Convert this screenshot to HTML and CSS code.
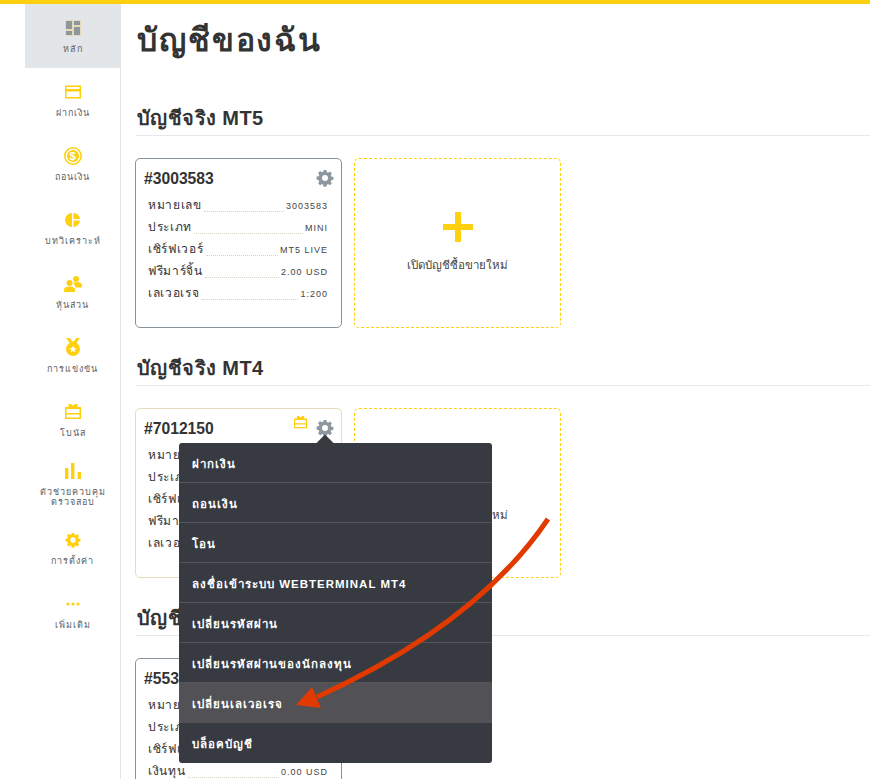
FILE: index.html
```html
<!DOCTYPE html>
<html lang="th">
<head>
<meta charset="utf-8">
<title>บัญชีของฉัน</title>
<link rel="stylesheet" href="styles.css">
</head>
<body>
<svg class="defs" width="0" height="0" aria-hidden="true">
  <defs>
    <path id="gear" fill-rule="evenodd" d="M6.6 0h2.8l.4 2.1 1.3.6 1.8-1.2 2 2-1.2 1.8.6 1.3 2.1.4v2.8l-2.1.4-.6 1.3 1.2 1.8-2 2-1.8-1.2-1.3.6-.4 2.1H6.6l-.4-2.1-1.3-.6-1.8 1.2-2-2 1.2-1.8-.6-1.3L-.4 9.4V6.6l2.1-.4.6-1.3-1.2-1.8 2-2 1.8 1.2 1.3-.6zM8 5a3 3 0 1 0 0 6 3 3 0 0 0 0-6z"/>
  </defs>
</svg>
<div class="topbar"></div>
<div class="layout">
  <nav class="sidebar">
    <a class="nav-item active">
      <svg class="nav-icon" viewBox="0 0 16 16"><rect width="16" height="16" fill="#e8d9b8"/><rect x="1" y="1" width="6" height="8" fill="#8f979e"/><rect x="9" y="1" width="6" height="4" fill="#8f979e"/><rect x="9" y="7" width="6" height="8" fill="#8f979e"/><rect x="1" y="11" width="6" height="4" fill="#8f979e"/></svg>
      <span>หลัก</span>
    </a>
    <a class="nav-item">
      <svg class="nav-icon" viewBox="0 0 16 16"><path fill="#ffd00f" fill-rule="evenodd" d="M0 1.500h16v13H0zM1.500 3v2h13V3zm0 4.500V13h13V7.500z"/></svg>
      <span>ฝากเงิน</span>
    </a>
    <a class="nav-item">
      <svg class="nav-icon coin" viewBox="0 0 18 18"><circle cx="9" cy="9" r="8.200" fill="none" stroke="#ffd00f" stroke-width="1.600"/><circle cx="9" cy="9" r="6" fill="#ffd00f"/><text x="9" y="12.800" class="dollar">$</text></svg>
      <span>ถอนเงิน</span>
    </a>
    <a class="nav-item">
      <svg class="nav-icon" viewBox="0 0 16 16"><path fill="#ffd00f" d="M7 1V15A7 7 0 0 1 7 1zM8.500 1A7 7 0 0 1 15 7H8.500zM8.500 8.500H15A7 7 0 0 1 8.500 15z"/></svg>
      <span>บทวิเคราะห์</span>
    </a>
    <a class="nav-item">
      <svg class="nav-icon big" viewBox="0 0 18 16"><circle cx="12" cy="3" r="3" fill="#ffd00f"/><circle cx="5.500" cy="7" r="3" fill="#ffd00f"/><path fill="#ffd00f" d="M0 16v-2.500C0 11.500 2.500 10.500 5.500 10.500S11 11.500 11 13.500V16zM9.500 7.500c.3-.5.3-1 .5-1.500 1.200.5 2.800.5 4 0 2.500.5 4 1.500 4 4v1.500h-6.500c-.5-1.500-1-2.500-2-4z"/></svg>
      <span>หุ้นส่วน</span>
    </a>
    <a class="nav-item">
      <svg class="nav-icon tall" viewBox="0 0 14 18"><path fill="#ffd00f" d="M0 0h3.500L7 4l3.500-4H14L9.500 6h-5z"/><circle cx="7" cy="11" r="7" fill="#ffd00f"/><path fill="#fff" d="M7 7.500l1 2.400 2.500.2-1.900 1.600.6 2.500L7 13l-2.200 1.200.6-2.500-1.900-1.600 2.500-.2z"/></svg>
      <span>การแข่งขัน</span>
    </a>
    <a class="nav-item">
      <svg class="nav-icon" viewBox="0 0 16 16"><path fill="#ffd00f" fill-rule="evenodd" d="M3.500 0H6l2 1.800L10 0h2.500v3H16v12H0V3h3.500zM1.500 5v4h13V5zm0 5.500V13.500h13v-3z"/></svg>
      <span>โบนัส</span>
    </a>
    <a class="nav-item">
      <svg class="nav-icon" viewBox="0 0 16 16"><rect x="0" y="5" width="3.400" height="11" fill="#ffd00f"/><rect x="6" y="0" width="3.400" height="16" fill="#ffd00f"/><rect x="12.600" y="9" width="3.400" height="7" fill="#ffd00f"/></svg>
      <span>ตัวช่วยควบคุม<br>ตรวจสอบ</span>
    </a>
    <a class="nav-item">
      <svg class="nav-icon" viewBox="-1 -1 18 18"><use href="#gear" fill="#ffd00f"/></svg>
      <span>การตั้งค่า</span>
    </a>
    <a class="nav-item">
      <svg class="nav-icon" viewBox="0 0 16 16"><circle cx="3" cy="8" r="1.600" fill="#ffd00f"/><circle cx="8" cy="8" r="1.600" fill="#ffd00f"/><circle cx="13" cy="8" r="1.600" fill="#ffd00f"/></svg>
      <span>เพิ่มเติม</span>
    </a>
  </nav>

  <main class="main">
    <h1 class="page-title">บัญชีของฉัน</h1>

    <section class="section">
      <h2 class="section-title">บัญชีจริง MT5</h2>
      <div class="cards">
        <article class="card">
          <header class="card-head">
            <h3 class="card-title">#3003583</h3>
            <svg class="gear-icon" viewBox="-1 -1 18 18"><use href="#gear" fill="#8d979f"/></svg>
          </header>
          <div class="row"><span>หมายเลข</span><i></i><b>3003583</b></div>
          <div class="row"><span>ประเภท</span><i></i><b>MINI</b></div>
          <div class="row"><span>เซิร์ฟเวอร์</span><i></i><b>MT5 LIVE</b></div>
          <div class="row"><span>ฟรีมาร์จิ้น</span><i></i><b>2.00 USD</b></div>
          <div class="row"><span>เลเวอเรจ</span><i></i><b>1:200</b></div>
        </article>
        <a class="card-add">
          <span class="plus"></span>
          <span class="add-label">เปิดบัญชีซื้อขายใหม่</span>
        </a>
      </div>
    </section>

    <section class="section">
      <h2 class="section-title">บัญชีจริง MT4</h2>
      <div class="cards">
        <article class="card card-open">
          <header class="card-head">
            <h3 class="card-title">#7012150</h3>
            <svg class="gift-icon" viewBox="0 0 16 16"><path fill="#ffd00f" fill-rule="evenodd" d="M3.500 0H6l2 1.800L10 0h2.500v3H16v12H0V3h3.500zM1.500 5v4h13V5zm0 5.500V13.500h13v-3z"/></svg>
            <svg class="gear-icon" viewBox="-1 -1 18 18"><use href="#gear" fill="#8d979f"/></svg>
          </header>
          <div class="row"><span>หมายเลข</span><i></i><b>7012150</b></div>
          <div class="row"><span>ประเภท</span><i></i><b>MINI</b></div>
          <div class="row"><span>เซิร์ฟเวอร์</span><i></i><b>MT4 LIVE</b></div>
          <div class="row"><span>ฟรีมาร์จิ้น</span><i></i><b>0.00 USD</b></div>
          <div class="row"><span>เลเวอเรจ</span><i></i><b>1:200</b></div>
          <ul class="menu">
            <li>ฝากเงิน</li>
            <li>ถอนเงิน</li>
            <li>โอน</li>
            <li>ลงชื่อเข้าระบบ WEBTERMINAL MT4</li>
            <li>เปลี่ยนรหัสผ่าน</li>
            <li>เปลี่ยนรหัสผ่านของนักลงทุน</li>
            <li class="menu-hover">เปลี่ยนเลเวอเรจ</li>
            <li>บล็อคบัญชี</li>
          </ul>
        </article>
        <a class="card-add">
          <span class="plus"></span>
          <span class="add-label">เปิดบัญชีซื้อขายใหม่</span>
        </a>
      </div>
    </section>

    <section class="section">
      <h2 class="section-title">บัญชีทดลอง</h2>
      <div class="cards">
        <article class="card">
          <header class="card-head">
            <h3 class="card-title">#5530000</h3>
          </header>
          <div class="row"><span>หมายเลข</span><i></i><b>5530000</b></div>
          <div class="row"><span>ประเภท</span><i></i><b>MINI</b></div>
          <div class="row"><span>เซิร์ฟเวอร์</span><i></i><b>MT4</b></div>
          <div class="row"><span>เงินทุน</span><i></i><b>0.00 USD</b></div>
        </article>
      </div>
    </section>
  </main>
</div>
<svg class="annotation" viewBox="0 0 870 779" aria-hidden="true">
  <path d="M548 519C500 590 420 650 317 697" fill="none" stroke="#e03a00" stroke-width="5"/>
  <path d="M296 705L312 687L321 708Z" fill="#e03a00"/>
</svg>
</body>
</html>
```

FILE: styles.css
```css
* { box-sizing: border-box; }

html, body {
  margin: 0;
  height: 779px;
  overflow: hidden;
  background: #fff;
}

body {
  position: relative;
  font-family: "Liberation Sans", "Noto Sans", "DejaVu Sans", sans-serif;
  color: #333;
}

.defs { position: absolute; }

.topbar {
  height: 4px;
  background: #ffd00f;
}

.layout {
  display: flex;
  height: 775px;
}

.sidebar {
  width: 96px;
  margin-left: 25px;
  flex: none;
  border-right: 1px solid #e3e5e7;
  display: flex;
  flex-direction: column;
}

.nav-item {
  height: 64px;
  flex: none;
  display: flex;
  flex-direction: column;
  align-items: center;
  justify-content: center;
  gap: 8px;
  padding-top: 2px;
  font-size: 9px;
  line-height: 10px;
  letter-spacing: 1px;
  text-align: center;
  color: #5d6267;
}

.nav-item.active { background: #e3e6e9; }

.nav-icon {
  width: 16px;
  height: 16px;
  flex: none;
  overflow: visible;
}

.nav-icon.big { width: 18px; }
.nav-icon.coin { width: 18px; height: 18px; margin: -1px 0; }
.nav-icon.tall { width: 14px; height: 18px; margin: -2px 0 0; }

.dollar {
  font: bold 11px "Liberation Sans", sans-serif;
  fill: #fff;
  text-anchor: middle;
}

.main {
  flex: 1;
  min-width: 0;
  padding-left: 15px;
}

.page-title {
  margin: 0 0 0 1px;
  height: 74px;
  font-size: 32px;
  line-height: 72px;
  font-weight: bold;
  letter-spacing: 1.9px;
  color: #333;
}

.section { height: 250px; }

.section-title {
  margin: 0 0 22px;
  height: 58px;
  padding: 26px 0 0 1px;
  border-bottom: 1px solid #e6e8ea;
  font-size: 20px;
  line-height: 28px;
  font-weight: bold;
  letter-spacing: 0.4px;
  color: #333;
}

.cards {
  display: flex;
  gap: 12px;
  margin-left: -1px;
}

.card {
  position: relative;
  width: 207px;
  height: 170px;
  padding: 10px 13px 0 12px;
  border: 1px solid #87929b;
  border-radius: 5px;
  background: #fff;
}

.card-open { border-color: #e8dcc0; }

.card-head {
  display: flex;
  align-items: center;
  gap: 10px;
  height: 20px;
  margin: 0 -6px 5px -4px;
}

.card-title {
  margin: 0 auto 0 0;
  font-size: 15.700px;
  line-height: 20px;
  font-weight: bold;
  color: #333;
}

.gear-icon {
  width: 18px;
  height: 18px;
  flex: none;
  margin-top: -2px;
}

.gift-icon {
  width: 13px;
  height: 13px;
  flex: none;
  margin: -14px -1px 0 0;
}

.row {
  display: flex;
  align-items: baseline;
  height: 22px;
  font-size: 12px;
  line-height: 22px;
  letter-spacing: 0.7px;
  color: #333;
}

.row span { flex: none; }

.row i {
  flex: 1;
  align-self: flex-end;
  height: 1px;
  margin: 0 2px 4px;
  border-bottom: 1px dotted #d6d2c6;
}

.row b {
  flex: none;
  font-size: 9px;
  line-height: 20px;
  font-weight: normal;
  letter-spacing: 1px;
  color: #444;
}

.card-add {
  width: 207px;
  height: 170px;
  border: 1px dashed #ffd00f;
  border-radius: 5px;
  display: flex;
  flex-direction: column;
  align-items: center;
  padding-top: 53px;
  gap: 15px;
}

.plus {
  width: 30px;
  height: 30px;
  flex: none;
  background:
    linear-gradient(#ffd00f, #ffd00f) center / 30px 6px no-repeat,
    linear-gradient(#ffd00f, #ffd00f) center / 6px 30px no-repeat;
}

.add-label {
  font-size: 11.500px;
  line-height: 16px;
  color: #444;
}

.menu {
  position: absolute;
  z-index: 5;
  top: 34px;
  left: 43px;
  width: 313px;
  height: 320px;
  margin: 0;
  padding: 0;
  list-style: none;
  background: #373a41;
  border-radius: 3px;
  color: #fff;
}

.menu::before {
  content: "";
  position: absolute;
  top: -6px;
  left: 140px;
  width: 12px;
  height: 12px;
  background: #373a41;
  transform: rotate(45deg);
}

.menu li {
  position: relative;
  height: 40px;
  padding: 1px 0 0 13px;
  border-bottom: 1px solid #55565a;
  font-size: 11.500px;
  font-weight: bold;
  line-height: 41px;
  letter-spacing: 1px;
}

.menu li:last-child { border-bottom: 0; }

.menu .menu-hover {
  background: #525155;
  border-bottom: 0;
}

.annotation {
  position: absolute;
  top: 0;
  left: 0;
  width: 870px;
  height: 779px;
  z-index: 10;
  pointer-events: none;
}
```
